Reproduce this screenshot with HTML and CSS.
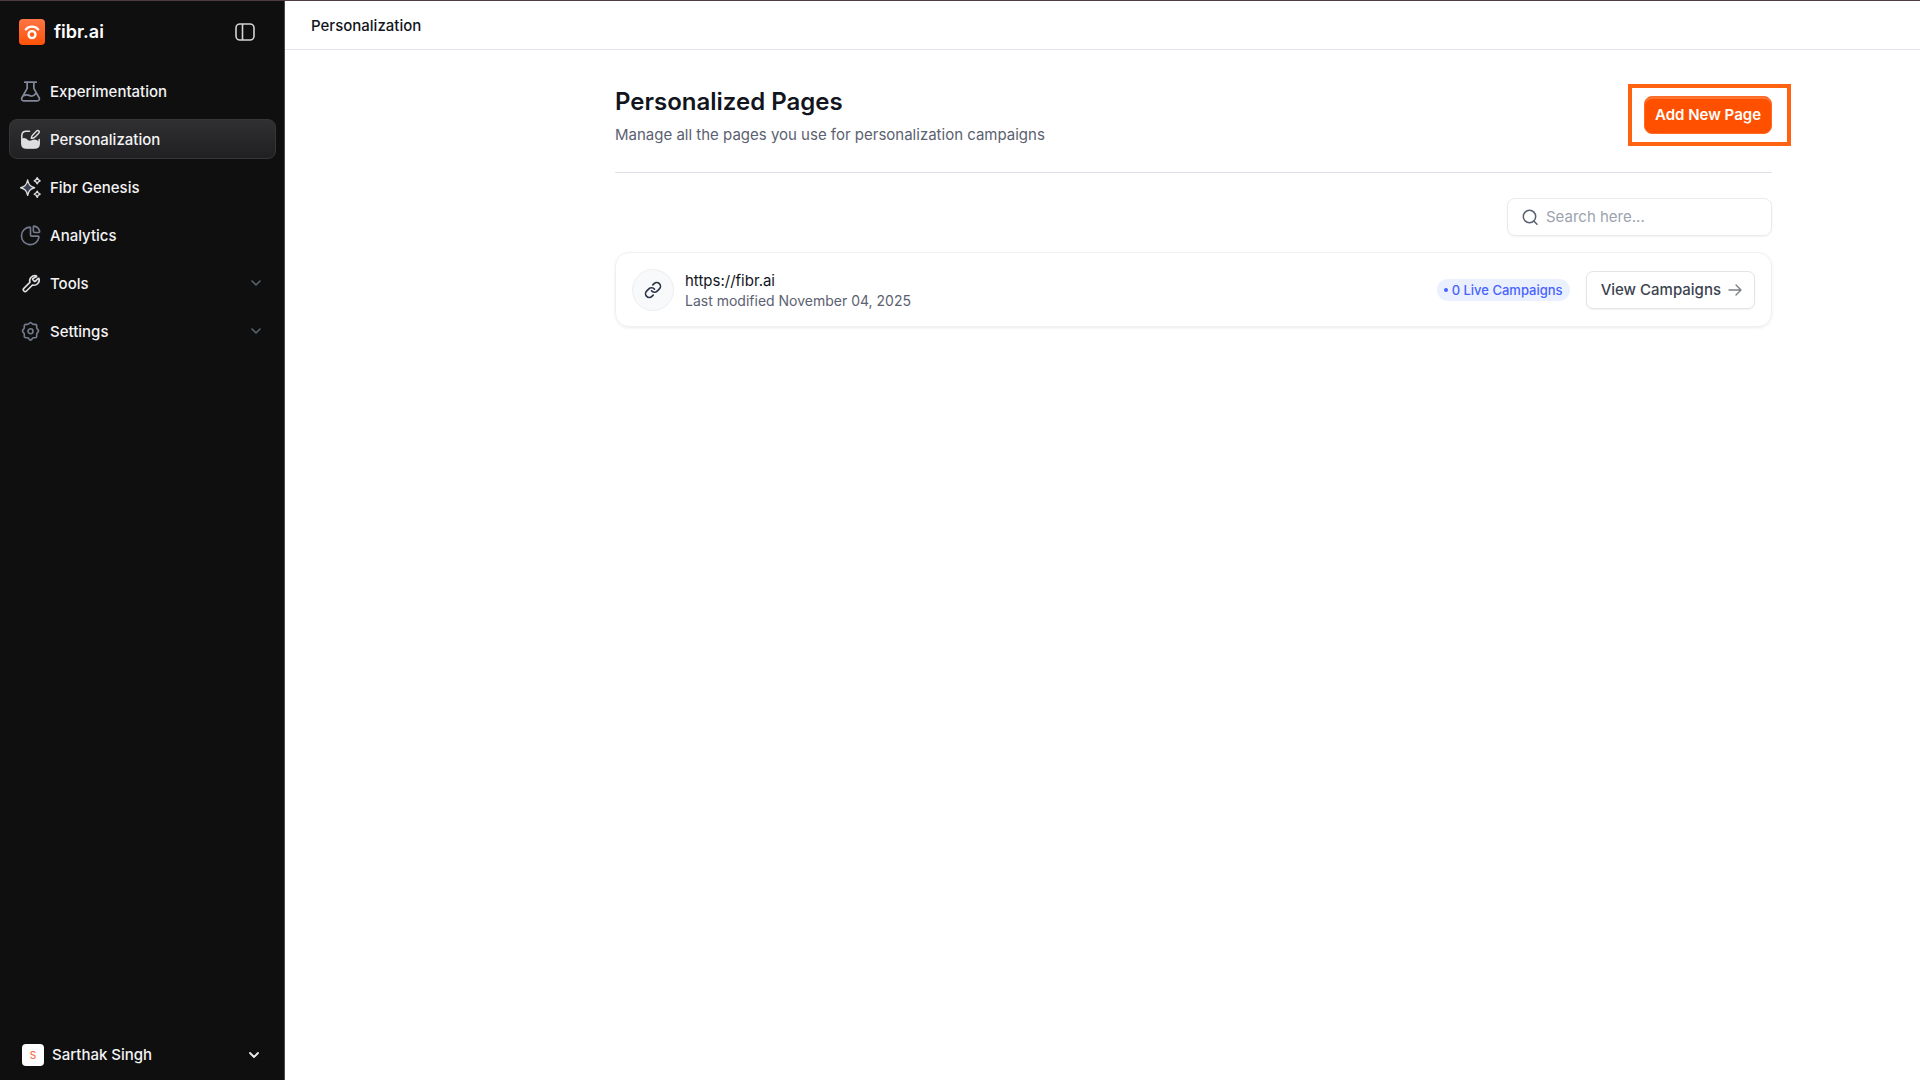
FILE: index.html
```html
<!DOCTYPE html>
<html lang="en">
<head>
<meta charset="utf-8">
<meta name="viewport" content="width=device-width, initial-scale=1">
<title>Personalization - fibr.ai</title>
<link rel="stylesheet" href="styles.css">
</head>
<body>
<div class="app">
  <aside class="sidebar">
    <div class="brand-row">
      <a class="brand" href="#">
        <svg class="logo" viewBox="0 0 26 26" fill="none" aria-hidden="true">
          <defs><linearGradient id="logo-fill" x1="0" y1="0" x2="0" y2="1"><stop offset="0" stop-color="#ff7545"/><stop offset="1" stop-color="#ff5208"/></linearGradient></defs>
          <rect width="26" height="26" rx="4" fill="url(#logo-fill)"/>
          <path d="M6.800 10.400C10 6.800 16 6.800 19.200 10.400" stroke="#fff" stroke-width="2.200" stroke-linecap="round"/>
          <circle cx="13" cy="15.600" r="3.500" stroke="#fff" stroke-width="2.300"/>
        </svg>
        <span>fibr.ai</span>
      </a>
      <button class="icon-button" type="button" aria-label="Toggle sidebar">
        <svg width="20" height="18" viewBox="0 0 20 18" fill="none" stroke="#d4d4d6" stroke-width="1.600"><rect x="1" y="1" width="18" height="16" rx="4"/><path d="M7.500 1v16"/></svg>
      </button>
    </div>
    <nav class="nav" aria-label="Main">
      <a class="nav-item" href="#">
        <svg class="nav-icon" viewBox="0 0 22 22" fill="none" stroke="#80889a" stroke-width="1.800" stroke-linecap="round" stroke-linejoin="round"><path d="M5 1.200h12M7.500 1.200v6.600L2 17.500c-.9 1.700 0 3.300 1.900 3.300h14.200c1.900 0 2.800-1.600 1.900-3.300L14.500 7.800V1.200M4.200 15.200c2.500-1.600 4.500-.6 6.300.2 2.200 1 4.200.2 6-2.400"/></svg>
        <span class="nav-label">Experimentation</span>
      </a>
      <a class="nav-item active" href="#" aria-current="page">
        <svg class="nav-icon" viewBox="0 0 22 22" fill="none"><path d="M10 2.300H6.500C3.500 2.300 1.900 4 1.900 6.900v8.300c0 3 1.700 4.800 4.700 4.800h8.800c3 0 4.700-1.800 4.700-4.800V11" stroke="#dededf" stroke-width="1.600" stroke-linecap="round"/><path d="M2 10.200c2.200-1.400 4.300-.4 5.900 1.100 1.700 1.600 3.100 1.200 4.800.2 2.200-1.300 4.900-.3 7.400 1.500v2.500c0 2.900-1.800 4.600-4.700 4.600H6.600C3.700 20.100 2 18.400 2 15.500z" fill="#dededf"/><path d="M11.800 9.700c.1-1.700.8-2.700 2-3.900l3.600-3.600c.8-.8 1.700-.9 2.400-.2s.6 1.600-.2 2.400L16 8c-1.200 1.200-2.400 1.900-4.200 1.700z" stroke="#dededf" stroke-width="1.500" stroke-linejoin="round"/></svg>
        <span class="nav-label">Personalization</span>
      </a>
      <a class="nav-item" href="#">
        <svg class="nav-icon" viewBox="0 0 22 22" fill="none" stroke="#dbdcdf" stroke-width="1.500" stroke-linejoin="round"><path d="M8 3.200c1 4.900 2.600 6.800 7.300 8-4.700 1.200-6.300 3.100-7.300 8-1-4.900-2.600-6.800-7.300-8 4.700-1.200 6.300-3.100 7.300-8z" fill="#3b4252"/><path d="M18 .8c.5 1.900 1.200 2.600 3.100 3.200-1.900.6-2.600 1.300-3.100 3.200-.5-1.900-1.200-2.600-3.100-3.200 1.900-.6 2.600-1.300 3.100-3.200zM18 14.800c.5 1.900 1.200 2.600 3.100 3.200-1.900.6-2.600 1.300-3.100 3.200-.5-1.900-1.200-2.600-3.100-3.200 1.900-.6 2.600-1.300 3.100-3.200z"/></svg>
        <span class="nav-label">Fibr Genesis</span>
      </a>
      <a class="nav-item" href="#">
        <svg class="nav-icon" viewBox="0 0 22 22" fill="none" stroke="#737b8c" stroke-width="1.700" stroke-linejoin="round"><path d="M10.200 2.200A9.200 9.200 0 1 0 19.800 13c.2-.8-.2-1.300-1-1.300h-6.500c-.8 0-1.300-.5-1.300-1.300V3c0-.5-.3-.8-.8-.8z"/><path d="M14 2c0-.7.500-1 1.200-.8 2.700.7 4.700 2.700 5.400 5.400.2.700-.2 1.200-.9 1.200h-4.200c-.9 0-1.500-.6-1.500-1.500z"/></svg>
        <span class="nav-label">Analytics</span>
      </a>
      <button class="nav-item" type="button" aria-expanded="false">
        <svg class="nav-icon" viewBox="0 0 24 24" fill="none" stroke="#dedfe2" stroke-width="1.900" stroke-linecap="round" stroke-linejoin="round"><path d="M14.700 6.300a1 1 0 0 0 0 1.400l1.600 1.600a1 1 0 0 0 1.400 0l3.100-3.100c.3-.3.900-.2 1 .3a6 6 0 0 1-7.500 7.200l-6.900 6.900a2.100 2.100 0 0 1-3-3l6.900-6.900a6 6 0 0 1 7.200-7.500c.5.100.6.700.3 1z"/></svg>
        <span class="nav-label">Tools</span>
        <svg class="chevron" viewBox="0 0 12 8" fill="none" stroke="#596171" stroke-width="1.600" stroke-linecap="round" stroke-linejoin="round"><path d="M2 2l4 4 4-4"/></svg>
      </button>
      <button class="nav-item" type="button" aria-expanded="false">
        <svg class="nav-icon" viewBox="0 0 22 22" fill="none" stroke="#737b8c" stroke-width="1.700" stroke-linejoin="round"><path d="M8.700 3.200 10 2.100c.6-.5 1.400-.5 2 0l1.300 1.100c.3.200.6.300 1 .3h1.600c.9 0 1.600.7 1.600 1.600v1.700c0 .3.100.7.300 1l1.200 1.500c.5.600.5 1.500 0 2.100l-1.200 1.500c-.2.300-.3.600-.3 1v2c0 .9-.7 1.600-1.600 1.600h-1.600c-.4 0-.7.100-1 .4L12 19.600c-.6.500-1.400.5-2 0l-1.300-1.700c-.3-.3-.6-.4-1-.4H6.100c-.9 0-1.600-.7-1.600-1.600v-2c0-.4-.1-.7-.3-1L3 11.400c-.5-.6-.5-1.500 0-2.100l1.200-1.500c.2-.3.300-.7.300-1V5.100c0-.9.700-1.600 1.600-1.600h1.600c.4 0 .7-.1 1-.3z"/><circle cx="11" cy="10.700" r="2.600"/></svg>
        <span class="nav-label">Settings</span>
        <svg class="chevron" viewBox="0 0 12 8" fill="none" stroke="#596171" stroke-width="1.600" stroke-linecap="round" stroke-linejoin="round"><path d="M2 2l4 4 4-4"/></svg>
      </button>
    </nav>
    <button class="account" type="button">
      <span class="avatar">S</span>
      <span>Sarthak Singh</span>
      <svg class="chevron" viewBox="0 0 12 8" fill="none" stroke="#eeeeef" stroke-width="1.800" stroke-linecap="round" stroke-linejoin="round"><path d="M2 2l4 4 4-4"/></svg>
    </button>
  </aside>

  <div class="main">
    <header class="topbar">Personalization</header>
    <main class="content">
      <div class="page-head">
        <div>
          <h1>Personalized Pages</h1>
          <p>Manage all the pages you use for personalization campaigns</p>
        </div>
        <div class="highlight"><button class="primary" type="button">Add New Page</button></div>
      </div>
      <label class="search">
        <svg width="18" height="18" viewBox="0 0 18 18" fill="none" stroke="#596170" stroke-width="1.500" stroke-linecap="round" aria-hidden="true"><circle cx="8.500" cy="8.500" r="6.200"/><path d="M13 13.200l3 3"/></svg>
        <input type="search" placeholder="Search here..." aria-label="Search pages">
      </label>
      <article class="card">
        <span class="link-badge">
          <svg width="18" height="18" viewBox="0 0 24 24" fill="none" stroke="#2b3448" stroke-width="2.200" stroke-linecap="round" stroke-linejoin="round" aria-hidden="true"><path d="M10 13a5 5 0 0 0 7.540.54l3-3a5 5 0 0 0-7.070-7.070l-1.720 1.710"/><path d="M14 11a5 5 0 0 0-7.540-.54l-3 3a5 5 0 0 0 7.070 7.070l1.710-1.710"/></svg>
        </span>
        <div class="page-info">
          <div class="page-url">https://fibr.ai</div>
          <div class="page-date">Last modified November 04, 2025</div>
        </div>
        <span class="status">0 Live Campaigns</span>
        <button class="secondary" type="button">View Campaigns
          <svg width="14" height="12" viewBox="0 0 14 12" fill="none" stroke="#7b8087" stroke-width="1.400" stroke-linecap="round" stroke-linejoin="round" aria-hidden="true"><path d="M1 6h12M8 1l5 5-5 5"/></svg>
        </button>
      </article>
    </main>
  </div>
</div>
</body>
</html>
```
FILE: styles.css
```css
* { box-sizing: border-box; }
body {
  margin: 0;
  font-family: Inter, "Liberation Sans", sans-serif;
  font-size: 15px;
  line-height: 20px;
  color: #12151d;
  background: #fff;
}
button, input { font: inherit; color: inherit; }
button { cursor: pointer; }
a { color: inherit; text-decoration: none; }
svg { flex: none; display: block; }

.app {
  display: flex;
  min-height: 100vh;
  border-top: 1px solid #4e3d40;
}

.sidebar {
  display: flex;
  flex-direction: column;
  flex: none;
  width: 285px;
  padding: 18px 8px 8px 9px;
  background: #0f0f10;
  border-right: 1px solid #4a4a4c;
  color: #f3f3f4;
  font-weight: 500;
}
.brand-row {
  display: flex;
  align-items: center;
  justify-content: space-between;
  padding: 0 21px 0 10px;
}
.brand {
  display: flex;
  align-items: center;
  gap: 9px;
  font-size: 18px;
  font-weight: 600;
  line-height: 26px;
  color: #fff;
}
.logo { width: 26px; height: 26px; }
.icon-button {
  padding: 0;
  border: 0;
  background: none;
}
.nav {
  display: flex;
  flex-direction: column;
  gap: 8px;
  margin-top: 26px;
}
.nav-item {
  display: flex;
  align-items: center;
  gap: 9px;
  height: 40px;
  padding: 0 13px 0 10px;
  border: 1px solid transparent;
  border-radius: 8px;
  background: none;
  text-align: left;
}
.nav-label { padding-top: 2px; }
.nav-icon { width: 21px; height: 21px; }
.nav-item.active {
  border-color: #363638;
  background: linear-gradient(#303032, #202022);
}
.chevron {
  width: 12px;
  height: 8px;
  margin-left: auto;
}
.account {
  display: flex;
  align-items: center;
  gap: 8px;
  height: 34px;
  margin-top: auto;
  padding: 0 16px 0 13px;
  border: 0;
  background: none;
}
.avatar {
  width: 22px;
  height: 22px;
  border-radius: 4px;
  background: #fff;
  color: #ff6b3d;
  font-size: 10px;
  line-height: 22px;
  text-align: center;
}

.main { flex: 1; min-width: 0; }
.topbar {
  height: 49px;
  padding: 15px 26px 13px;
  border-bottom: 1px solid #e4e5ec;
  font-weight: 500;
}
.content {
  display: flex;
  flex-direction: column;
  padding: 36px 148px 36px 330px;
}
.page-head {
  display: flex;
  align-items: flex-start;
  justify-content: space-between;
  padding-bottom: 27px;
  border-bottom: 1px solid #e0e1e8;
}
h1 {
  margin: 0;
  font-size: 24px;
  font-weight: 600;
  line-height: 32px;
}
.page-head p {
  margin: 7px 0 0;
  color: #5b6170;
}
.highlight {
  position: relative;
  margin-top: 10px;
}
.highlight::after {
  content: "";
  position: absolute;
  inset: -12px -19px -12px -16px;
  border: 4px solid #ff6210;
  pointer-events: none;
}
.primary {
  display: block;
  height: 38px;
  padding: 0 10px;
  border: 1px solid #ff6a24;
  border-radius: 8px;
  background: #ff5000;
  box-shadow: inset 0 2px 0 #ff7333;
  color: #fff;
  font-weight: 600;
}
.search {
  display: flex;
  align-items: center;
  align-self: flex-end;
  gap: 7px;
  width: 265px;
  height: 38px;
  margin-top: 25px;
  padding: 0 13px;
  border: 1px solid #e9eaec;
  border-radius: 8px;
  box-shadow: 0 1px 2px #0000000d;
}
.search input {
  flex: 1;
  min-width: 0;
  padding: 0;
  border: 0;
  outline: 0;
  background: none;
}
.search input::placeholder { color: #9ca3af; opacity: 1; }
.card {
  display: flex;
  align-items: center;
  height: 75px;
  margin-top: 16px;
  padding: 0 16px;
  border: 1px solid #f0f0f2;
  border-radius: 14px;
  box-shadow: 0 1px 3px #00000014;
}
.link-badge {
  display: grid;
  place-items: center;
  width: 42px;
  height: 42px;
  border: 1px solid #eceef1;
  border-radius: 50%;
  background: #f8f9fb;
}
.page-info {
  margin: 0 auto 0 11px;
  padding-top: 3px;
}
.page-date {
  color: #5b6170;
  font-size: 14px;
}
.status {
  display: flex;
  align-items: center;
  gap: 4px;
  height: 22px;
  margin-right: 16px;
  padding: 0 7px;
  border-radius: 11px;
  background: #ebf0ff;
  color: #4763ff;
  font-size: 13px;
  font-weight: 500;
}
.status::before {
  content: "";
  width: 4px;
  height: 4px;
  border-radius: 50%;
  background: currentColor;
}
.secondary {
  display: flex;
  align-items: center;
  gap: 7px;
  height: 38px;
  padding: 0 12px 0 14px;
  border: 1px solid #e3e4e8;
  border-radius: 7px;
  background: #fff;
  box-shadow: 0 1px 2px #0000000d;
  color: #3c4350;
  font-weight: 500;
}
```
